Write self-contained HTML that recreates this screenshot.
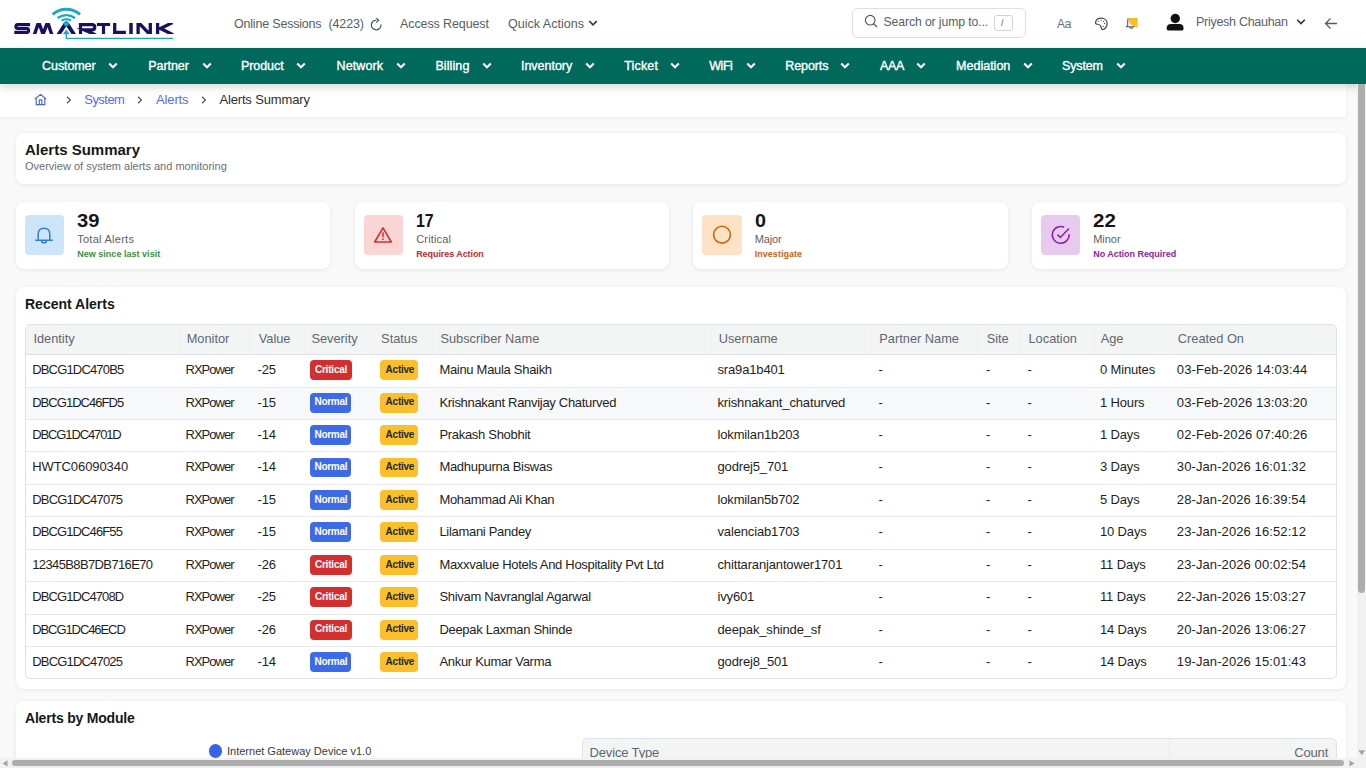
<!DOCTYPE html>
<html><head><meta charset="utf-8"><style>
*{box-sizing:border-box;margin:0;padding:0}
html,body{width:1366px;height:768px;overflow:hidden;background:#f9f9f9;font-family:"Liberation Sans", sans-serif;color:#222}
.t{position:absolute;white-space:nowrap}
svg{position:absolute;overflow:visible}
</style></head><body>
<div style="position:absolute;left:0px;top:0px;width:1366px;height:47px;background:#fff"></div>
<svg style="left:0;top:0" width="180" height="45" viewBox="0 0 180 45">
<defs><clipPath id="lc"><rect x="0" y="23" width="180" height="11"/></clipPath></defs>
<g fill="none" stroke="#1b1060" stroke-width="3" stroke-linejoin="miter" stroke-miterlimit="20" clip-path="url(#lc)">
<path d="M30.1 24.6 H17.6 Q15.9 24.6 15.9 26.6 Q15.9 28.5 17.6 28.5 H26.9 Q28.6 28.5 28.6 30.5 Q28.6 32.4 26.9 32.4 H14.3" stroke-width="3.1"/>
<path d="M34 36 L38.6 22 L43.1 34.2 L47.6 22 L52.2 36" stroke-width="3.4"/>
<path d="M57.6 36 L66.3 22.6 L75 36" stroke-width="3.8"/>
<path d="M80.5 35 V24.6 H91.8 Q94.8 24.6 94.8 27.2 Q94.8 29.8 91.8 29.8 H84 L95.8 35" stroke-width="3.2"/>
<path d="M96.9 24.5 H110.1 M103.5 24.5 V35" stroke-width="3.2"/>
<path d="M114.7 22 V32.3 H125.9" stroke-width="3.3"/>
<path d="M131 22 V35" stroke-width="3.5"/>
<path d="M138.1 35 V22 L150.3 35 V22" stroke-width="3.3"/>
<path d="M157.6 22 V35 M172.5 22.6 L160.5 28.5 L173 34.8" stroke-width="3.3"/>
</g>
<g fill="none" stroke="#1ba6c2" stroke-linecap="butt">
<path d="M52.6 14.4 A20.5 20.5 0 0 1 80 14.4" stroke-width="3"/>
<path d="M57.6 18 A14.6 14.6 0 0 1 75 18" stroke-width="2.4"/>
<path d="M61.6 20.5 A10 10 0 0 1 71 20.5" stroke-width="2"/>
<path d="M66.3 33 V38.4 H173" stroke-width="1.3"/>
</g>
<circle cx="66.3" cy="23.6" r="2.6" fill="#1ba6c2"/>
<path d="M62.8 34.2 L66.3 29.6 L69.8 34.2 Z" fill="#1ba6c2"/>
</svg>
<div class="t" style="left:234.0px;top:18.00px;font-size:12.5px;line-height:12.5px;color:#565d65;;letter-spacing:-0.195px">Online Sessions</div>
<div class="t" style="left:328.4px;top:18.00px;font-size:12.5px;line-height:12.5px;color:#565d65;;letter-spacing:-0.108px">(4223)</div>
<svg style="left:370px;top:17px" width="13" height="14" viewBox="0 0 13 14"><path d="M6.4 3.1 A4.85 4.85 0 1 0 11 7.4" fill="none" stroke="#4b525a" stroke-width="1.25"/><path d="M6.3 1.1 L8.7 3.2 L6.2 5.6" fill="none" stroke="#4b525a" stroke-width="1.25"/></svg>
<div class="t" style="left:400.0px;top:18.00px;font-size:12.5px;line-height:12.5px;color:#565d65;;letter-spacing:-0.102px">Access Request</div>
<div class="t" style="left:508.0px;top:18.00px;font-size:12.5px;line-height:12.5px;color:#565d65;;letter-spacing:0.022px">Quick Actions</div>
<svg style="left:588px;top:19px" width="10" height="8" viewBox="0 0 10 8"><path d="M1.2 2 L5 5.8 L8.8 2" fill="none" stroke="#333" stroke-width="1.6"/></svg>
<div style="position:absolute;left:852px;top:8px;width:174px;height:30px;border:1px solid #dde1e6;border-radius:5px;background:#fff"></div>
<svg style="left:864px;top:14px" width="15" height="14" viewBox="0 0 15 14"><circle cx="6.2" cy="6.2" r="4.8" fill="none" stroke="#4b5563" stroke-width="1.2"/><path d="M9.6 9.6 L13 13" stroke="#4b5563" stroke-width="1.3"/></svg>
<div class="t" style="left:883.6px;top:16.00px;font-size:12.2px;line-height:12.2px;color:#555d66;;letter-spacing:-0.098px">Search or jump to...</div>
<div style="position:absolute;left:994px;top:15px;width:19px;height:16px;border:1px solid #cfd3d8;border-radius:3px"></div>
<div class="t" style="left:1001.0px;top:19.00px;font-size:9px;line-height:9px;color:#555;">/</div>
<div class="t" style="left:1057.0px;top:18.00px;font-size:12px;line-height:12px;color:#6f6f6f;letter-spacing:-0.3px">Aa</div>
<svg style="left:1094px;top:17px" width="15" height="14" viewBox="0 0 15 14"><path d="M1.5 5.8 C1.8 2.8 4.5 1.1 7.4 1.1 C10.6 1.1 13.1 3.4 13.1 6.6 C13.1 9.8 10.8 12.5 8.4 12.5 C7 12.5 7.4 10.4 6.6 8.8 C5.8 7.2 4 7.4 2.6 7.1 C1.8 6.9 1.4 6.5 1.5 5.8 Z" fill="none" stroke="#444b52" stroke-width="1.25"/><circle cx="4.6" cy="4.3" r="0.65" fill="#444b52"/><circle cx="7.2" cy="3.2" r="0.65" fill="#444b52"/><circle cx="9.5" cy="4.3" r="0.65" fill="#444b52"/><circle cx="10.5" cy="6.4" r="0.65" fill="#444b52"/><circle cx="9.3" cy="9.3" r="0.65" fill="#444b52"/></svg>
<svg style="left:1124px;top:16px" width="16" height="16" viewBox="0 0 16 16"><path d="M4.3 1.9 H13.6 V11.2 A9.3 9.3 0 0 1 4.3 1.9 Z" fill="#fbbd23"/><path d="M4.3 2.4 Q3.7 3.2 3.7 5.4 V9.4 Q3.7 10.4 1.8 10.7 H10.4" fill="none" stroke="#555c63" stroke-width="1.1"/><path d="M5.4 11.1 Q7.3 13.3 9.2 11.1" fill="none" stroke="#555c63" stroke-width="1.1"/></svg>
<svg style="left:1166px;top:13px" width="18" height="18" viewBox="0 0 18 18"><circle cx="9.3" cy="5.5" r="4.7" fill="#111"/><path d="M0.6 15.6 Q0.6 11 5 11 H13.5 Q17.6 11 17.6 15.6 Q17.6 17.6 16 17.6 H2.2 Q0.6 17.6 0.6 15.6 Z" fill="#111"/></svg>
<div class="t" style="left:1196.0px;top:16.00px;font-size:12.5px;line-height:12.5px;color:#5a6169;;letter-spacing:-0.279px">Priyesh Chauhan</div>
<svg style="left:1296px;top:18px" width="10" height="8" viewBox="0 0 10 8"><path d="M1.2 1.8 L5 5.6 L8.8 1.8" fill="none" stroke="#333" stroke-width="1.6"/></svg>
<svg style="left:1324px;top:17px" width="14" height="13" viewBox="0 0 14 13"><path d="M13 6.5 H1.5 M6.5 1.5 L1.5 6.5 L6.5 11.5" fill="none" stroke="#555c63" stroke-width="1.3"/></svg>
<div style="position:absolute;left:0px;top:48px;width:1366px;height:36px;background:#00695c;box-shadow:0 3px 8px rgba(0,0,0,.16);z-index:3"></div>
<div class="t" style="left:42.1px;top:60.00px;font-size:12.5px;line-height:12.5px;color:#fff;z-index:4;-webkit-text-stroke:0.35px #fff;letter-spacing:-0.098px">Customer</div>
<svg style="left:108.2px;top:62px;z-index:4" width="10" height="8" viewBox="0 0 10 8"><path d="M1.2 1.5 L5 5.3 L8.8 1.5" fill="none" stroke="#fff" stroke-width="2"/></svg>
<div class="t" style="left:148.2px;top:60.00px;font-size:12.5px;line-height:12.5px;color:#fff;z-index:4;-webkit-text-stroke:0.35px #fff;letter-spacing:-0.050px">Partner</div>
<svg style="left:202.0px;top:62px;z-index:4" width="10" height="8" viewBox="0 0 10 8"><path d="M1.2 1.5 L5 5.3 L8.8 1.5" fill="none" stroke="#fff" stroke-width="2"/></svg>
<div class="t" style="left:240.9px;top:60.00px;font-size:12.5px;line-height:12.5px;color:#fff;z-index:4;-webkit-text-stroke:0.35px #fff;letter-spacing:-0.049px">Product</div>
<svg style="left:296.4px;top:62px;z-index:4" width="10" height="8" viewBox="0 0 10 8"><path d="M1.2 1.5 L5 5.3 L8.8 1.5" fill="none" stroke="#fff" stroke-width="2"/></svg>
<div class="t" style="left:336.5px;top:60.00px;font-size:12.5px;line-height:12.5px;color:#fff;z-index:4;-webkit-text-stroke:0.35px #fff;letter-spacing:0.109px">Network</div>
<svg style="left:395.7px;top:62px;z-index:4" width="10" height="8" viewBox="0 0 10 8"><path d="M1.2 1.5 L5 5.3 L8.8 1.5" fill="none" stroke="#fff" stroke-width="2"/></svg>
<div class="t" style="left:435.4px;top:60.00px;font-size:12.5px;line-height:12.5px;color:#fff;z-index:4;-webkit-text-stroke:0.35px #fff;letter-spacing:0.107px">Billing</div>
<svg style="left:481.7px;top:62px;z-index:4" width="10" height="8" viewBox="0 0 10 8"><path d="M1.2 1.5 L5 5.3 L8.8 1.5" fill="none" stroke="#fff" stroke-width="2"/></svg>
<div class="t" style="left:521.0px;top:60.00px;font-size:12.5px;line-height:12.5px;color:#fff;z-index:4;-webkit-text-stroke:0.35px #fff;letter-spacing:-0.028px">Inventory</div>
<svg style="left:584.7px;top:62px;z-index:4" width="10" height="8" viewBox="0 0 10 8"><path d="M1.2 1.5 L5 5.3 L8.8 1.5" fill="none" stroke="#fff" stroke-width="2"/></svg>
<div class="t" style="left:624.3px;top:60.00px;font-size:12.5px;line-height:12.5px;color:#fff;z-index:4;-webkit-text-stroke:0.35px #fff;letter-spacing:0.145px">Ticket</div>
<svg style="left:669.9px;top:62px;z-index:4" width="10" height="8" viewBox="0 0 10 8"><path d="M1.2 1.5 L5 5.3 L8.8 1.5" fill="none" stroke="#fff" stroke-width="2"/></svg>
<div class="t" style="left:709.2px;top:60.00px;font-size:12.5px;line-height:12.5px;color:#fff;z-index:4;-webkit-text-stroke:0.35px #fff;letter-spacing:-0.433px">WiFi</div>
<svg style="left:745.6px;top:62px;z-index:4" width="10" height="8" viewBox="0 0 10 8"><path d="M1.2 1.5 L5 5.3 L8.8 1.5" fill="none" stroke="#fff" stroke-width="2"/></svg>
<div class="t" style="left:785.2px;top:60.00px;font-size:12.5px;line-height:12.5px;color:#fff;z-index:4;-webkit-text-stroke:0.35px #fff;letter-spacing:-0.080px">Reports</div>
<svg style="left:840.1px;top:62px;z-index:4" width="10" height="8" viewBox="0 0 10 8"><path d="M1.2 1.5 L5 5.3 L8.8 1.5" fill="none" stroke="#fff" stroke-width="2"/></svg>
<div class="t" style="left:880.1px;top:60.00px;font-size:12.5px;line-height:12.5px;color:#fff;z-index:4;-webkit-text-stroke:0.35px #fff;letter-spacing:-0.408px">AAA</div>
<svg style="left:916.3px;top:62px;z-index:4" width="10" height="8" viewBox="0 0 10 8"><path d="M1.2 1.5 L5 5.3 L8.8 1.5" fill="none" stroke="#fff" stroke-width="2"/></svg>
<div class="t" style="left:956.1px;top:60.00px;font-size:12.5px;line-height:12.5px;color:#fff;z-index:4;-webkit-text-stroke:0.35px #fff;letter-spacing:-0.000px">Mediation</div>
<svg style="left:1022.5px;top:62px;z-index:4" width="10" height="8" viewBox="0 0 10 8"><path d="M1.2 1.5 L5 5.3 L8.8 1.5" fill="none" stroke="#fff" stroke-width="2"/></svg>
<div class="t" style="left:1062.0px;top:60.00px;font-size:12.5px;line-height:12.5px;color:#fff;z-index:4;-webkit-text-stroke:0.35px #fff;letter-spacing:-0.138px">System</div>
<svg style="left:1115.6px;top:62px;z-index:4" width="10" height="8" viewBox="0 0 10 8"><path d="M1.2 1.5 L5 5.3 L8.8 1.5" fill="none" stroke="#fff" stroke-width="2"/></svg>
<div style="position:absolute;left:0px;top:84px;width:1346px;height:33px;background:#fff;box-shadow:0 1px 3px rgba(0,0,0,.06);z-index:2"></div>
<svg style="left:34px;top:93px;z-index:3" width="13" height="13" viewBox="0 0 13 13"><path d="M0.9 6 L6.5 1.4 L12.1 6 M2.2 5 V11.6 H10.8 V5 M5.3 11.6 V6.8 H7.8 V11.6" fill="none" stroke="#4763ee" stroke-width="1.15"/></svg>
<svg style="left:66.0px;top:96px;z-index:3" width="6" height="8" viewBox="0 0 6 8"><path d="M1 0.8 L4.4 4 L1 7.2" fill="none" stroke="#555" stroke-width="1.2"/></svg>
<svg style="left:137.4px;top:96px;z-index:3" width="6" height="8" viewBox="0 0 6 8"><path d="M1 0.8 L4.4 4 L1 7.2" fill="none" stroke="#555" stroke-width="1.2"/></svg>
<svg style="left:201.1px;top:96px;z-index:3" width="6" height="8" viewBox="0 0 6 8"><path d="M1 0.8 L4.4 4 L1 7.2" fill="none" stroke="#555" stroke-width="1.2"/></svg>
<div class="t" style="left:84.3px;top:93.00px;font-size:13px;line-height:13px;color:#5868ec;z-index:3;letter-spacing:-0.549px">System</div>
<div class="t" style="left:156.1px;top:93.00px;font-size:13px;line-height:13px;color:#5868ec;z-index:3;letter-spacing:-0.147px">Alerts</div>
<div class="t" style="left:219.4px;top:93.00px;font-size:13px;line-height:13px;color:#2e2e2e;z-index:3;letter-spacing:-0.151px">Alerts Summary</div>
<div style="position:absolute;left:15.5px;top:132.5px;width:1330px;height:51px;background:#fff;border-radius:8px;box-shadow:0 1px 4px rgba(0,0,0,.08)"></div>
<div class="t" style="left:25.0px;top:142.00px;font-size:15px;line-height:15px;color:#171717;font-weight:bold;">Alerts Summary</div>
<div class="t" style="left:25.0px;top:161.00px;font-size:11px;line-height:11px;color:#6b6e73;">Overview of system alerts and monitoring</div>
<div style="position:absolute;left:15.5px;top:202px;width:314.5px;height:67px;background:#fff;border-radius:8px;box-shadow:0 1px 4px rgba(0,0,0,.08)"></div>
<div style="position:absolute;left:24.5px;top:215.4px;width:39.5px;height:39.8px;background:#cde5fb;border-radius:4px"></div>
<svg style="left:34.2px;top:225.3px" width="20" height="20" viewBox="0 0 20 20"><path d="M4.2 14.8 V9 Q4.2 3.2 10 3.2 Q15.8 3.2 15.8 9 V14.8 M1.2 15.2 H18.8 M7.6 15.4 Q7.6 17.8 10 17.8 Q12.4 17.8 12.4 15.4" fill="none" stroke="#2f7fd6" stroke-width="1.5"/></svg>
<div class="t" style="left:77.2px;top:212.00px;font-size:18px;line-height:18px;color:#151515;font-weight:bold;transform:scaleX(1.119);transform-origin:0 0">39</div>
<div class="t" style="left:77.2px;top:234.00px;font-size:11px;line-height:11px;color:#5f6064;;letter-spacing:0.263px">Total Alerts</div>
<div class="t" style="left:77.2px;top:250.00px;font-size:9px;line-height:9px;color:#3b8f3e;font-weight:bold;;letter-spacing:0.024px">New since last visit</div>
<div style="position:absolute;left:354.5px;top:202px;width:314.5px;height:67px;background:#fff;border-radius:8px;box-shadow:0 1px 4px rgba(0,0,0,.08)"></div>
<div style="position:absolute;left:363.5px;top:215.4px;width:39.5px;height:39.8px;background:#fbd4d4;border-radius:4px"></div>
<svg style="left:373.2px;top:225.3px" width="20" height="20" viewBox="0 0 20 20"><path d="M10 2.9 L18.3 17 H1.7 Z" fill="none" stroke="#d32f2f" stroke-width="1.6" stroke-linejoin="round"/><path d="M10 7.3 V12.2" stroke="#d32f2f" stroke-width="1.5"/><circle cx="10" cy="14.2" r="0.9" fill="#d32f2f"/></svg>
<div class="t" style="left:416.2px;top:212.00px;font-size:18px;line-height:18px;color:#151515;font-weight:bold;transform:scaleX(0.884);transform-origin:0 0">17</div>
<div class="t" style="left:416.2px;top:234.00px;font-size:11px;line-height:11px;color:#5f6064;;letter-spacing:0.168px">Critical</div>
<div class="t" style="left:416.2px;top:250.00px;font-size:9px;line-height:9px;color:#c62828;font-weight:bold;;letter-spacing:-0.071px">Requires Action</div>
<div style="position:absolute;left:693px;top:202px;width:314.5px;height:67px;background:#fff;border-radius:8px;box-shadow:0 1px 4px rgba(0,0,0,.08)"></div>
<div style="position:absolute;left:702px;top:215.4px;width:39.5px;height:39.8px;background:#fde2c6;border-radius:4px"></div>
<svg style="left:711.8px;top:225.3px" width="20" height="20" viewBox="0 0 20 20"><circle cx="10" cy="9.7" r="8.4" fill="none" stroke="#c8660e" stroke-width="1.6"/></svg>
<div class="t" style="left:754.7px;top:212.00px;font-size:18px;line-height:18px;color:#151515;font-weight:bold;transform:scaleX(1.099);transform-origin:0 0">0</div>
<div class="t" style="left:754.7px;top:234.00px;font-size:11px;line-height:11px;color:#5f6064;;letter-spacing:-0.129px">Major</div>
<div class="t" style="left:754.7px;top:250.00px;font-size:9px;line-height:9px;color:#c8660e;font-weight:bold;;letter-spacing:0.037px">Investigate</div>
<div style="position:absolute;left:1031.5px;top:202px;width:314.5px;height:67px;background:#fff;border-radius:8px;box-shadow:0 1px 4px rgba(0,0,0,.08)"></div>
<div style="position:absolute;left:1040.5px;top:215.4px;width:39.5px;height:39.8px;background:#e7cbee;border-radius:4px"></div>
<svg style="left:1051.2px;top:225.3px" width="20" height="20" viewBox="0 0 20 20"><path d="M18.1 9.3 A8.4 8.4 0 1 1 13.2 2.2" fill="none" stroke="#8b1fa8" stroke-width="1.5"/><path d="M6.4 9.6 L9.4 12.4 L18 3.6" fill="none" stroke="#8b1fa8" stroke-width="1.5"/></svg>
<div class="t" style="left:1093.2px;top:212.00px;font-size:18px;line-height:18px;color:#151515;font-weight:bold;transform:scaleX(1.139);transform-origin:0 0">22</div>
<div class="t" style="left:1093.2px;top:234.00px;font-size:11px;line-height:11px;color:#5f6064;;letter-spacing:-0.029px">Minor</div>
<div class="t" style="left:1093.2px;top:250.00px;font-size:9px;line-height:9px;color:#8a1fa6;font-weight:bold;;letter-spacing:-0.040px">No Action Required</div>
<div style="position:absolute;left:15.5px;top:287px;width:1330px;height:402px;background:#fff;border-radius:8px;box-shadow:0 1px 4px rgba(0,0,0,.08)"></div>
<div class="t" style="left:25.0px;top:297.00px;font-size:14px;line-height:14px;color:#171717;font-weight:bold;">Recent Alerts</div>
<div style="position:absolute;left:24.6px;top:324.4px;width:1312px;height:355px;border:1px solid #dfe2e6;border-radius:5px;background:#fff;overflow:hidden"></div>
<div style="position:absolute;left:25.6px;top:325.4px;width:1310px;height:29.3px;background:#f3f4f4;border-radius:4px 4px 0 0"></div>
<div style="position:absolute;left:25.6px;top:354.2px;width:1310px;height:1px;background:#dde0e4"></div>
<div style="position:absolute;left:179.3px;top:325.4px;width:1px;height:29.3px;background:#eef0f1"></div>
<div style="position:absolute;left:250.2px;top:325.4px;width:1px;height:29.3px;background:#eef0f1"></div>
<div style="position:absolute;left:303.8px;top:325.4px;width:1px;height:29.3px;background:#eef0f1"></div>
<div style="position:absolute;left:373.7px;top:325.4px;width:1px;height:29.3px;background:#eef0f1"></div>
<div style="position:absolute;left:432.3px;top:325.4px;width:1px;height:29.3px;background:#eef0f1"></div>
<div style="position:absolute;left:711px;top:325.4px;width:1px;height:29.3px;background:#eef0f1"></div>
<div style="position:absolute;left:871px;top:325.4px;width:1px;height:29.3px;background:#eef0f1"></div>
<div style="position:absolute;left:978px;top:325.4px;width:1px;height:29.3px;background:#eef0f1"></div>
<div style="position:absolute;left:1020px;top:325.4px;width:1px;height:29.3px;background:#eef0f1"></div>
<div style="position:absolute;left:1092.6px;top:325.4px;width:1px;height:29.3px;background:#eef0f1"></div>
<div style="position:absolute;left:1169px;top:325.4px;width:1px;height:29.3px;background:#eef0f1"></div>
<div class="t" style="left:33.4px;top:333.00px;font-size:12.8px;line-height:12.8px;color:#5e6873;">Identity</div>
<div class="t" style="left:186.7px;top:333.00px;font-size:12.8px;line-height:12.8px;color:#5e6873;">Monitor</div>
<div class="t" style="left:258.7px;top:333.00px;font-size:12.8px;line-height:12.8px;color:#5e6873;">Value</div>
<div class="t" style="left:311.4px;top:333.00px;font-size:12.8px;line-height:12.8px;color:#5e6873;">Severity</div>
<div class="t" style="left:381.1px;top:333.00px;font-size:12.8px;line-height:12.8px;color:#5e6873;">Status</div>
<div class="t" style="left:440.4px;top:333.00px;font-size:12.8px;line-height:12.8px;color:#5e6873;">Subscriber Name</div>
<div class="t" style="left:718.7px;top:333.00px;font-size:12.8px;line-height:12.8px;color:#5e6873;">Username</div>
<div class="t" style="left:879.3px;top:333.00px;font-size:12.8px;line-height:12.8px;color:#5e6873;">Partner Name</div>
<div class="t" style="left:986.7px;top:333.00px;font-size:12.8px;line-height:12.8px;color:#5e6873;">Site</div>
<div class="t" style="left:1028.5px;top:333.00px;font-size:12.8px;line-height:12.8px;color:#5e6873;">Location</div>
<div class="t" style="left:1100.7px;top:333.00px;font-size:12.8px;line-height:12.8px;color:#5e6873;">Age</div>
<div class="t" style="left:1177.8px;top:333.00px;font-size:12.8px;line-height:12.8px;color:#5e6873;">Created On</div>
<div style="position:absolute;left:25.6px;top:386.63px;width:1310px;height:1px;background:#e6e8eb"></div>
<div class="t" style="left:32.2px;top:363.00px;font-size:13px;line-height:13px;color:#1e1e1e;letter-spacing:-0.83px">DBCG1DC470B5</div>
<div class="t" style="left:185.5px;top:363.00px;font-size:13px;line-height:13px;color:#1e1e1e;;letter-spacing:-0.987px">RXPower</div>
<div class="t" style="left:257.6px;top:363.00px;font-size:13px;line-height:13px;color:#1e1e1e;letter-spacing:-0.15px">-25</div>
<div style="position:absolute;left:310px;top:360.3px;width:42px;height:19.9px;background:#d32f2f;border-radius:4px"></div>
<div class="t" style="left:314.9px;top:365.00px;font-size:10px;line-height:10px;color:#fff;font-weight:bold;letter-spacing:-0.2px">Critical</div>
<div style="position:absolute;left:380.4px;top:360.3px;width:37.5px;height:19.9px;background:#fbbf2b;border-radius:4px"></div>
<div class="t" style="left:385.6px;top:365.00px;font-size:10px;line-height:10px;color:#222a1e;font-weight:bold;letter-spacing:-0.25px">Active</div>
<div class="t" style="left:439.4px;top:363.00px;font-size:13px;line-height:13px;color:#1e1e1e;letter-spacing:-0.3px">Mainu Maula Shaikh</div>
<div class="t" style="left:717.5px;top:363.00px;font-size:13px;line-height:13px;color:#1e1e1e;letter-spacing:-0.15px">sra9a1b401</div>
<div class="t" style="left:878.5px;top:363.00px;font-size:13px;line-height:13px;color:#1e1e1e;">-</div>
<div class="t" style="left:986.0px;top:363.00px;font-size:13px;line-height:13px;color:#1e1e1e;">-</div>
<div class="t" style="left:1027.4px;top:363.00px;font-size:13px;line-height:13px;color:#1e1e1e;">-</div>
<div class="t" style="left:1100.0px;top:363.00px;font-size:13px;line-height:13px;color:#1e1e1e;letter-spacing:-0.15px">0 Minutes</div>
<div class="t" style="left:1176.8px;top:363.00px;font-size:13px;line-height:13px;color:#1e1e1e;letter-spacing:0.1px">03-Feb-2026 14:03:44</div>
<div style="position:absolute;left:25.6px;top:387.63px;width:1310px;height:31.43px;background:#f7f8f9"></div>
<div style="position:absolute;left:25.6px;top:419.06px;width:1310px;height:1px;background:#e6e8eb"></div>
<div class="t" style="left:32.2px;top:396.00px;font-size:13px;line-height:13px;color:#1e1e1e;letter-spacing:-0.96px">DBCG1DC46FD5</div>
<div class="t" style="left:185.5px;top:396.00px;font-size:13px;line-height:13px;color:#1e1e1e;;letter-spacing:-0.987px">RXPower</div>
<div class="t" style="left:257.6px;top:396.00px;font-size:13px;line-height:13px;color:#1e1e1e;letter-spacing:-0.15px">-15</div>
<div style="position:absolute;left:310px;top:392.73px;width:41.2px;height:19.9px;background:#3d6be8;border-radius:4px"></div>
<div class="t" style="left:314.5px;top:397.00px;font-size:10px;line-height:10px;color:#fff;font-weight:bold;letter-spacing:-0.3px">Normal</div>
<div style="position:absolute;left:380.4px;top:392.73px;width:37.5px;height:19.9px;background:#fbbf2b;border-radius:4px"></div>
<div class="t" style="left:385.6px;top:397.00px;font-size:10px;line-height:10px;color:#222a1e;font-weight:bold;letter-spacing:-0.25px">Active</div>
<div class="t" style="left:439.4px;top:396.00px;font-size:13px;line-height:13px;color:#1e1e1e;letter-spacing:-0.3px">Krishnakant Ranvijay Chaturved</div>
<div class="t" style="left:717.5px;top:396.00px;font-size:13px;line-height:13px;color:#1e1e1e;letter-spacing:-0.15px">krishnakant_chaturved</div>
<div class="t" style="left:878.5px;top:396.00px;font-size:13px;line-height:13px;color:#1e1e1e;">-</div>
<div class="t" style="left:986.0px;top:396.00px;font-size:13px;line-height:13px;color:#1e1e1e;">-</div>
<div class="t" style="left:1027.4px;top:396.00px;font-size:13px;line-height:13px;color:#1e1e1e;">-</div>
<div class="t" style="left:1100.0px;top:396.00px;font-size:13px;line-height:13px;color:#1e1e1e;letter-spacing:-0.15px">1 Hours</div>
<div class="t" style="left:1176.8px;top:396.00px;font-size:13px;line-height:13px;color:#1e1e1e;letter-spacing:0.1px">03-Feb-2026 13:03:20</div>
<div style="position:absolute;left:25.6px;top:451.49px;width:1310px;height:1px;background:#e6e8eb"></div>
<div class="t" style="left:32.2px;top:428.00px;font-size:13px;line-height:13px;color:#1e1e1e;letter-spacing:-1.12px">DBCG1DC4701D</div>
<div class="t" style="left:185.5px;top:428.00px;font-size:13px;line-height:13px;color:#1e1e1e;;letter-spacing:-0.987px">RXPower</div>
<div class="t" style="left:257.6px;top:428.00px;font-size:13px;line-height:13px;color:#1e1e1e;letter-spacing:-0.15px">-14</div>
<div style="position:absolute;left:310px;top:425.16px;width:41.2px;height:19.9px;background:#3d6be8;border-radius:4px"></div>
<div class="t" style="left:314.5px;top:430.00px;font-size:10px;line-height:10px;color:#fff;font-weight:bold;letter-spacing:-0.3px">Normal</div>
<div style="position:absolute;left:380.4px;top:425.16px;width:37.5px;height:19.9px;background:#fbbf2b;border-radius:4px"></div>
<div class="t" style="left:385.6px;top:430.00px;font-size:10px;line-height:10px;color:#222a1e;font-weight:bold;letter-spacing:-0.25px">Active</div>
<div class="t" style="left:439.4px;top:428.00px;font-size:13px;line-height:13px;color:#1e1e1e;letter-spacing:-0.3px">Prakash Shobhit</div>
<div class="t" style="left:717.5px;top:428.00px;font-size:13px;line-height:13px;color:#1e1e1e;letter-spacing:-0.15px">lokmilan1b203</div>
<div class="t" style="left:878.5px;top:428.00px;font-size:13px;line-height:13px;color:#1e1e1e;">-</div>
<div class="t" style="left:986.0px;top:428.00px;font-size:13px;line-height:13px;color:#1e1e1e;">-</div>
<div class="t" style="left:1027.4px;top:428.00px;font-size:13px;line-height:13px;color:#1e1e1e;">-</div>
<div class="t" style="left:1100.0px;top:428.00px;font-size:13px;line-height:13px;color:#1e1e1e;letter-spacing:-0.15px">1 Days</div>
<div class="t" style="left:1176.8px;top:428.00px;font-size:13px;line-height:13px;color:#1e1e1e;letter-spacing:0.1px">02-Feb-2026 07:40:26</div>
<div style="position:absolute;left:25.6px;top:483.92px;width:1310px;height:1px;background:#e6e8eb"></div>
<div class="t" style="left:32.2px;top:460.00px;font-size:13px;line-height:13px;color:#1e1e1e;letter-spacing:-0.08px">HWTC06090340</div>
<div class="t" style="left:185.5px;top:460.00px;font-size:13px;line-height:13px;color:#1e1e1e;;letter-spacing:-0.987px">RXPower</div>
<div class="t" style="left:257.6px;top:460.00px;font-size:13px;line-height:13px;color:#1e1e1e;letter-spacing:-0.15px">-14</div>
<div style="position:absolute;left:310px;top:457.59000000000003px;width:41.2px;height:19.9px;background:#3d6be8;border-radius:4px"></div>
<div class="t" style="left:314.5px;top:462.00px;font-size:10px;line-height:10px;color:#fff;font-weight:bold;letter-spacing:-0.3px">Normal</div>
<div style="position:absolute;left:380.4px;top:457.59000000000003px;width:37.5px;height:19.9px;background:#fbbf2b;border-radius:4px"></div>
<div class="t" style="left:385.6px;top:462.00px;font-size:10px;line-height:10px;color:#222a1e;font-weight:bold;letter-spacing:-0.25px">Active</div>
<div class="t" style="left:439.4px;top:460.00px;font-size:13px;line-height:13px;color:#1e1e1e;letter-spacing:-0.3px">Madhupurna Biswas</div>
<div class="t" style="left:717.5px;top:460.00px;font-size:13px;line-height:13px;color:#1e1e1e;letter-spacing:-0.15px">godrej5_701</div>
<div class="t" style="left:878.5px;top:460.00px;font-size:13px;line-height:13px;color:#1e1e1e;">-</div>
<div class="t" style="left:986.0px;top:460.00px;font-size:13px;line-height:13px;color:#1e1e1e;">-</div>
<div class="t" style="left:1027.4px;top:460.00px;font-size:13px;line-height:13px;color:#1e1e1e;">-</div>
<div class="t" style="left:1100.0px;top:460.00px;font-size:13px;line-height:13px;color:#1e1e1e;letter-spacing:-0.15px">3 Days</div>
<div class="t" style="left:1176.8px;top:460.00px;font-size:13px;line-height:13px;color:#1e1e1e;letter-spacing:0.1px">30-Jan-2026 16:01:32</div>
<div style="position:absolute;left:25.6px;top:516.3499999999999px;width:1310px;height:1px;background:#e6e8eb"></div>
<div class="t" style="left:32.2px;top:493.00px;font-size:13px;line-height:13px;color:#1e1e1e;letter-spacing:-0.81px">DBCG1DC47075</div>
<div class="t" style="left:185.5px;top:493.00px;font-size:13px;line-height:13px;color:#1e1e1e;;letter-spacing:-0.987px">RXPower</div>
<div class="t" style="left:257.6px;top:493.00px;font-size:13px;line-height:13px;color:#1e1e1e;letter-spacing:-0.15px">-15</div>
<div style="position:absolute;left:310px;top:490.02px;width:41.2px;height:19.9px;background:#3d6be8;border-radius:4px"></div>
<div class="t" style="left:314.5px;top:495.00px;font-size:10px;line-height:10px;color:#fff;font-weight:bold;letter-spacing:-0.3px">Normal</div>
<div style="position:absolute;left:380.4px;top:490.02px;width:37.5px;height:19.9px;background:#fbbf2b;border-radius:4px"></div>
<div class="t" style="left:385.6px;top:495.00px;font-size:10px;line-height:10px;color:#222a1e;font-weight:bold;letter-spacing:-0.25px">Active</div>
<div class="t" style="left:439.4px;top:493.00px;font-size:13px;line-height:13px;color:#1e1e1e;letter-spacing:-0.3px">Mohammad Ali Khan</div>
<div class="t" style="left:717.5px;top:493.00px;font-size:13px;line-height:13px;color:#1e1e1e;letter-spacing:-0.15px">lokmilan5b702</div>
<div class="t" style="left:878.5px;top:493.00px;font-size:13px;line-height:13px;color:#1e1e1e;">-</div>
<div class="t" style="left:986.0px;top:493.00px;font-size:13px;line-height:13px;color:#1e1e1e;">-</div>
<div class="t" style="left:1027.4px;top:493.00px;font-size:13px;line-height:13px;color:#1e1e1e;">-</div>
<div class="t" style="left:1100.0px;top:493.00px;font-size:13px;line-height:13px;color:#1e1e1e;letter-spacing:-0.15px">5 Days</div>
<div class="t" style="left:1176.8px;top:493.00px;font-size:13px;line-height:13px;color:#1e1e1e;letter-spacing:0.1px">28-Jan-2026 16:39:54</div>
<div style="position:absolute;left:25.6px;top:548.78px;width:1310px;height:1px;background:#e6e8eb"></div>
<div class="t" style="left:32.2px;top:525.00px;font-size:13px;line-height:13px;color:#1e1e1e;letter-spacing:-0.88px">DBCG1DC46F55</div>
<div class="t" style="left:185.5px;top:525.00px;font-size:13px;line-height:13px;color:#1e1e1e;;letter-spacing:-0.987px">RXPower</div>
<div class="t" style="left:257.6px;top:525.00px;font-size:13px;line-height:13px;color:#1e1e1e;letter-spacing:-0.15px">-15</div>
<div style="position:absolute;left:310px;top:522.45px;width:41.2px;height:19.9px;background:#3d6be8;border-radius:4px"></div>
<div class="t" style="left:314.5px;top:527.00px;font-size:10px;line-height:10px;color:#fff;font-weight:bold;letter-spacing:-0.3px">Normal</div>
<div style="position:absolute;left:380.4px;top:522.45px;width:37.5px;height:19.9px;background:#fbbf2b;border-radius:4px"></div>
<div class="t" style="left:385.6px;top:527.00px;font-size:10px;line-height:10px;color:#222a1e;font-weight:bold;letter-spacing:-0.25px">Active</div>
<div class="t" style="left:439.4px;top:525.00px;font-size:13px;line-height:13px;color:#1e1e1e;letter-spacing:-0.3px">Lilamani Pandey</div>
<div class="t" style="left:717.5px;top:525.00px;font-size:13px;line-height:13px;color:#1e1e1e;letter-spacing:-0.15px">valenciab1703</div>
<div class="t" style="left:878.5px;top:525.00px;font-size:13px;line-height:13px;color:#1e1e1e;">-</div>
<div class="t" style="left:986.0px;top:525.00px;font-size:13px;line-height:13px;color:#1e1e1e;">-</div>
<div class="t" style="left:1027.4px;top:525.00px;font-size:13px;line-height:13px;color:#1e1e1e;">-</div>
<div class="t" style="left:1100.0px;top:525.00px;font-size:13px;line-height:13px;color:#1e1e1e;letter-spacing:-0.15px">10 Days</div>
<div class="t" style="left:1176.8px;top:525.00px;font-size:13px;line-height:13px;color:#1e1e1e;letter-spacing:0.1px">23-Jan-2026 16:52:12</div>
<div style="position:absolute;left:25.6px;top:581.2099999999999px;width:1310px;height:1px;background:#e6e8eb"></div>
<div class="t" style="left:32.2px;top:558.00px;font-size:13px;line-height:13px;color:#1e1e1e;letter-spacing:-0.62px">12345B8B7DB716E70</div>
<div class="t" style="left:185.5px;top:558.00px;font-size:13px;line-height:13px;color:#1e1e1e;;letter-spacing:-0.987px">RXPower</div>
<div class="t" style="left:257.6px;top:558.00px;font-size:13px;line-height:13px;color:#1e1e1e;letter-spacing:-0.15px">-26</div>
<div style="position:absolute;left:310px;top:554.88px;width:42px;height:19.9px;background:#d32f2f;border-radius:4px"></div>
<div class="t" style="left:314.9px;top:560.00px;font-size:10px;line-height:10px;color:#fff;font-weight:bold;letter-spacing:-0.2px">Critical</div>
<div style="position:absolute;left:380.4px;top:554.88px;width:37.5px;height:19.9px;background:#fbbf2b;border-radius:4px"></div>
<div class="t" style="left:385.6px;top:560.00px;font-size:10px;line-height:10px;color:#222a1e;font-weight:bold;letter-spacing:-0.25px">Active</div>
<div class="t" style="left:439.4px;top:558.00px;font-size:13px;line-height:13px;color:#1e1e1e;letter-spacing:-0.3px">Maxxvalue Hotels And Hospitality Pvt Ltd</div>
<div class="t" style="left:717.5px;top:558.00px;font-size:13px;line-height:13px;color:#1e1e1e;letter-spacing:-0.15px">chittaranjantower1701</div>
<div class="t" style="left:878.5px;top:558.00px;font-size:13px;line-height:13px;color:#1e1e1e;">-</div>
<div class="t" style="left:986.0px;top:558.00px;font-size:13px;line-height:13px;color:#1e1e1e;">-</div>
<div class="t" style="left:1027.4px;top:558.00px;font-size:13px;line-height:13px;color:#1e1e1e;">-</div>
<div class="t" style="left:1100.0px;top:558.00px;font-size:13px;line-height:13px;color:#1e1e1e;letter-spacing:-0.15px">11 Days</div>
<div class="t" style="left:1176.8px;top:558.00px;font-size:13px;line-height:13px;color:#1e1e1e;letter-spacing:0.1px">23-Jan-2026 00:02:54</div>
<div style="position:absolute;left:25.6px;top:613.64px;width:1310px;height:1px;background:#e6e8eb"></div>
<div class="t" style="left:32.2px;top:590.00px;font-size:13px;line-height:13px;color:#1e1e1e;letter-spacing:-0.90px">DBCG1DC4708D</div>
<div class="t" style="left:185.5px;top:590.00px;font-size:13px;line-height:13px;color:#1e1e1e;;letter-spacing:-0.987px">RXPower</div>
<div class="t" style="left:257.6px;top:590.00px;font-size:13px;line-height:13px;color:#1e1e1e;letter-spacing:-0.15px">-25</div>
<div style="position:absolute;left:310px;top:587.3100000000001px;width:42px;height:19.9px;background:#d32f2f;border-radius:4px"></div>
<div class="t" style="left:314.9px;top:592.00px;font-size:10px;line-height:10px;color:#fff;font-weight:bold;letter-spacing:-0.2px">Critical</div>
<div style="position:absolute;left:380.4px;top:587.3100000000001px;width:37.5px;height:19.9px;background:#fbbf2b;border-radius:4px"></div>
<div class="t" style="left:385.6px;top:592.00px;font-size:10px;line-height:10px;color:#222a1e;font-weight:bold;letter-spacing:-0.25px">Active</div>
<div class="t" style="left:439.4px;top:590.00px;font-size:13px;line-height:13px;color:#1e1e1e;letter-spacing:-0.3px">Shivam Navranglal Agarwal</div>
<div class="t" style="left:717.5px;top:590.00px;font-size:13px;line-height:13px;color:#1e1e1e;letter-spacing:-0.15px">ivy601</div>
<div class="t" style="left:878.5px;top:590.00px;font-size:13px;line-height:13px;color:#1e1e1e;">-</div>
<div class="t" style="left:986.0px;top:590.00px;font-size:13px;line-height:13px;color:#1e1e1e;">-</div>
<div class="t" style="left:1027.4px;top:590.00px;font-size:13px;line-height:13px;color:#1e1e1e;">-</div>
<div class="t" style="left:1100.0px;top:590.00px;font-size:13px;line-height:13px;color:#1e1e1e;letter-spacing:-0.15px">11 Days</div>
<div class="t" style="left:1176.8px;top:590.00px;font-size:13px;line-height:13px;color:#1e1e1e;letter-spacing:0.1px">22-Jan-2026 15:03:27</div>
<div style="position:absolute;left:25.6px;top:646.0699999999999px;width:1310px;height:1px;background:#e6e8eb"></div>
<div class="t" style="left:32.2px;top:623.00px;font-size:13px;line-height:13px;color:#1e1e1e;letter-spacing:-1.08px">DBCG1DC46ECD</div>
<div class="t" style="left:185.5px;top:623.00px;font-size:13px;line-height:13px;color:#1e1e1e;;letter-spacing:-0.987px">RXPower</div>
<div class="t" style="left:257.6px;top:623.00px;font-size:13px;line-height:13px;color:#1e1e1e;letter-spacing:-0.15px">-26</div>
<div style="position:absolute;left:310px;top:619.74px;width:42px;height:19.9px;background:#d32f2f;border-radius:4px"></div>
<div class="t" style="left:314.9px;top:624.00px;font-size:10px;line-height:10px;color:#fff;font-weight:bold;letter-spacing:-0.2px">Critical</div>
<div style="position:absolute;left:380.4px;top:619.74px;width:37.5px;height:19.9px;background:#fbbf2b;border-radius:4px"></div>
<div class="t" style="left:385.6px;top:624.00px;font-size:10px;line-height:10px;color:#222a1e;font-weight:bold;letter-spacing:-0.25px">Active</div>
<div class="t" style="left:439.4px;top:623.00px;font-size:13px;line-height:13px;color:#1e1e1e;letter-spacing:-0.3px">Deepak Laxman Shinde</div>
<div class="t" style="left:717.5px;top:623.00px;font-size:13px;line-height:13px;color:#1e1e1e;letter-spacing:-0.15px">deepak_shinde_sf</div>
<div class="t" style="left:878.5px;top:623.00px;font-size:13px;line-height:13px;color:#1e1e1e;">-</div>
<div class="t" style="left:986.0px;top:623.00px;font-size:13px;line-height:13px;color:#1e1e1e;">-</div>
<div class="t" style="left:1027.4px;top:623.00px;font-size:13px;line-height:13px;color:#1e1e1e;">-</div>
<div class="t" style="left:1100.0px;top:623.00px;font-size:13px;line-height:13px;color:#1e1e1e;letter-spacing:-0.15px">14 Days</div>
<div class="t" style="left:1176.8px;top:623.00px;font-size:13px;line-height:13px;color:#1e1e1e;letter-spacing:0.1px">20-Jan-2026 13:06:27</div>
<div class="t" style="left:32.2px;top:655.00px;font-size:13px;line-height:13px;color:#1e1e1e;letter-spacing:-0.81px">DBCG1DC47025</div>
<div class="t" style="left:185.5px;top:655.00px;font-size:13px;line-height:13px;color:#1e1e1e;;letter-spacing:-0.987px">RXPower</div>
<div class="t" style="left:257.6px;top:655.00px;font-size:13px;line-height:13px;color:#1e1e1e;letter-spacing:-0.15px">-14</div>
<div style="position:absolute;left:310px;top:652.17px;width:41.2px;height:19.9px;background:#3d6be8;border-radius:4px"></div>
<div class="t" style="left:314.5px;top:657.00px;font-size:10px;line-height:10px;color:#fff;font-weight:bold;letter-spacing:-0.3px">Normal</div>
<div style="position:absolute;left:380.4px;top:652.17px;width:37.5px;height:19.9px;background:#fbbf2b;border-radius:4px"></div>
<div class="t" style="left:385.6px;top:657.00px;font-size:10px;line-height:10px;color:#222a1e;font-weight:bold;letter-spacing:-0.25px">Active</div>
<div class="t" style="left:439.4px;top:655.00px;font-size:13px;line-height:13px;color:#1e1e1e;letter-spacing:-0.3px">Ankur Kumar Varma</div>
<div class="t" style="left:717.5px;top:655.00px;font-size:13px;line-height:13px;color:#1e1e1e;letter-spacing:-0.15px">godrej8_501</div>
<div class="t" style="left:878.5px;top:655.00px;font-size:13px;line-height:13px;color:#1e1e1e;">-</div>
<div class="t" style="left:986.0px;top:655.00px;font-size:13px;line-height:13px;color:#1e1e1e;">-</div>
<div class="t" style="left:1027.4px;top:655.00px;font-size:13px;line-height:13px;color:#1e1e1e;">-</div>
<div class="t" style="left:1100.0px;top:655.00px;font-size:13px;line-height:13px;color:#1e1e1e;letter-spacing:-0.15px">14 Days</div>
<div class="t" style="left:1176.8px;top:655.00px;font-size:13px;line-height:13px;color:#1e1e1e;letter-spacing:0.1px">19-Jan-2026 15:01:43</div>
<div style="position:absolute;left:15.5px;top:700.8px;width:1330px;height:100px;background:#fff;border-radius:8px;box-shadow:0 1px 4px rgba(0,0,0,.08)"></div>
<div class="t" style="left:25.0px;top:711.00px;font-size:14px;line-height:14px;color:#171717;font-weight:bold;letter-spacing:-0.2px">Alerts by Module</div>
<div style="position:absolute;left:208.8px;top:744.4px;width:13.7px;height:13.7px;background:#3b63e6;border-radius:50%"></div>
<div class="t" style="left:227.0px;top:746.00px;font-size:11px;line-height:11px;color:#3a3a3a;">Internet Gateway Device v1.0</div>
<div style="position:absolute;left:581.8px;top:738.4px;width:755px;height:40px;border:1px solid #dfe2e6;border-radius:5px;background:#f3f4f4"></div>
<div style="position:absolute;left:1169.4px;top:739.4px;width:1px;height:30px;background:#e9eaec"></div>
<div class="t" style="left:589.5px;top:746.00px;font-size:13px;line-height:13px;color:#5e6873;letter-spacing:-0.15px">Device Type</div>
<div class="t" style="left:1294.2px;top:746.00px;font-size:13px;line-height:13px;color:#5e6873;letter-spacing:-0.15px">Count</div>
<div style="position:absolute;left:1357px;top:84px;width:9px;height:684px;background:#f1f1f1;z-index:5"></div>
<div style="position:absolute;left:1358.3px;top:84px;width:6.7px;height:509px;background:#adadad;border-radius:0 0 4px 4px;z-index:6"></div>
<svg style="left:1358px;top:750px;z-index:6" width="8" height="6" viewBox="0 0 8 6"><path d="M0.3 0.3 H7.3 L3.8 5.3 Z" fill="#a3a3a3"/></svg>
<div style="position:absolute;left:0px;top:758px;width:1357px;height:10px;background:#f1f1f1;z-index:5"></div>
<div style="position:absolute;left:12px;top:760px;width:1332px;height:6px;background:#adadad;border-radius:3px;z-index:6"></div>
<svg style="left:2px;top:760px;z-index:6" width="6" height="7" viewBox="0 0 6 7"><path d="M5.5 0.2 V6.6 L0.6 3.4 Z" fill="#a3a3a3"/></svg>
<svg style="left:1349px;top:760px;z-index:6" width="6" height="7" viewBox="0 0 6 7"><path d="M0.5 0.2 V6.6 L5.4 3.4 Z" fill="#a3a3a3"/></svg>
</body></html>
